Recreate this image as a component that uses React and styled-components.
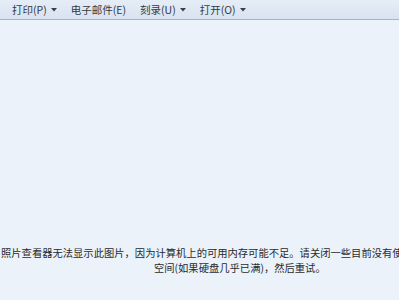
import React from "react";
import styled, { createGlobalStyle } from "styled-components";

const Global = createGlobalStyle`
  html, body { margin: 0; padding: 0; }
  body {
    width: 399px;
    height: 300px;
    overflow: hidden;
    font-family: "Noto Sans CJK SC", "Microsoft YaHei", sans-serif;
    background: #ebf2fa;
  }
`;

const Window = styled.div`
  display: flex;
  flex-direction: column;
  width: 399px;
  height: 300px;
  overflow: hidden;
  background: #ebf2fa;
`;

const Toolbar = styled.div`
  display: flex;
  align-items: center;
  height: 19px;
  padding-left: 5px;
  background: linear-gradient(#e5edf7, #d8e3f0);
  border-bottom: 1px solid #a3b5cc;
  flex-shrink: 0;
`;

const Item = styled.div`
  display: flex;
  align-items: center;
  gap: 4px;
  padding: 0 7px;
  height: 19px;
  font-size: 10.5px;
  line-height: 19px;
  color: #333a44;
  white-space: nowrap;
`;

const Arrow = () => (
  <svg width="6" height="4" viewBox="0 0 6 4">
    <polygon points="0,0 6,0 3,3.5" fill="#3a3f48" />
  </svg>
);

const Viewer = styled.div`
  flex: 1;
  display: flex;
  flex-direction: column;
  padding-top: 225px;
  overflow: hidden;
`;

const Message = styled.div`
  display: flex;
  flex-direction: column;
  font-size: 10.3px;
  line-height: 15px;
  color: #2a2a2a;
`;

const Line = styled.div`
  white-space: nowrap;
  padding-left: ${(p) => p.$indent}px;
`;

export default function App() {
  return (
    <>
      <Global />
      <Window>
        <Toolbar>
          <Item>打印(P)<Arrow /></Item>
          <Item>电子邮件(E)</Item>
          <Item>刻录(U)<Arrow /></Item>
          <Item>打开(O)<Arrow /></Item>
        </Toolbar>
        <Viewer>
          <Message>
            <Line $indent={1}>照片查看器无法显示此图片，因为计算机上的可用内存可能不足。请关闭一些目前没有使用的程序或者释放部分硬盘</Line>
            <Line $indent={154}>空间(如果硬盘几乎已满)，然后重试。</Line>
          </Message>
        </Viewer>
      </Window>
    </>
  );
}
